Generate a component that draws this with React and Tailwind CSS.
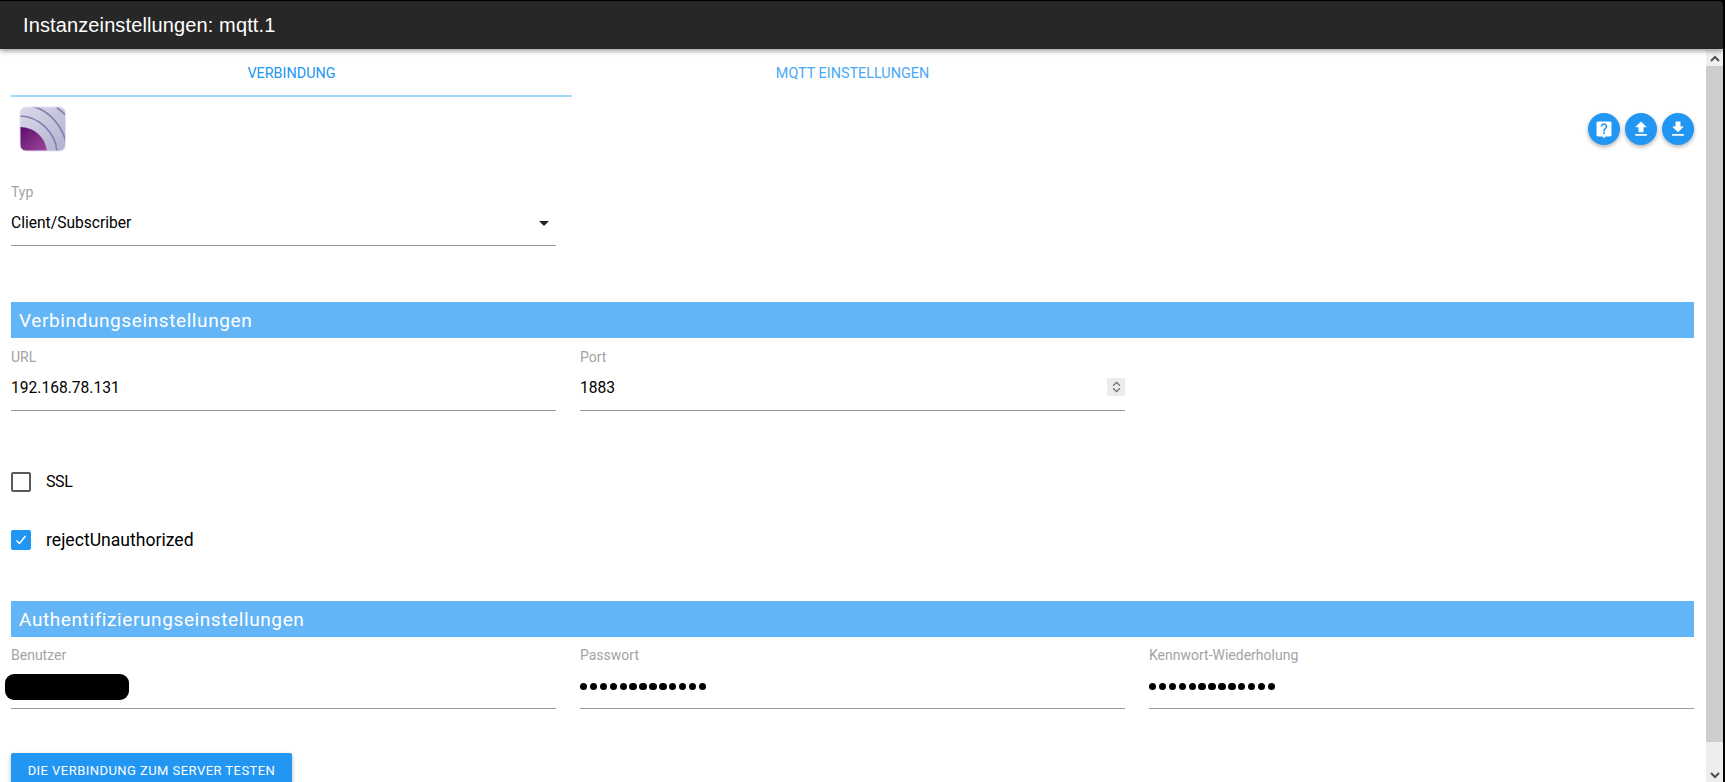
import React from "react";

const Label = ({ children }) => (
  <div className="h-[14px] text-[14px] leading-[14px] text-[#a3a3a3]">{children}</div>
);

const Field = ({ label, children, className = "" }) => (
  <div className={`flex flex-col ${className}`}>
    <Label>{label}</Label>
    <div className="relative mt-[5px] h-[42px] pb-[2px] flex items-center border-b border-[#9a9a9a] text-[15.6px] text-black">
      {children}
    </div>
  </div>
);

const Dots = () => (
  <div className="flex gap-[2.5px]">
    {Array.from({ length: 13 }).map((_, i) => (
      <span key={i} className="w-[7.4px] h-[7.4px] rounded-full bg-black block" />
    ))}
  </div>
);

const Section = ({ children }) => (
  <div className="h-[36px] bg-[#64b5f6] pl-[8px] pt-[2px] flex items-center text-[19px] tracking-[0.6px] text-white">
    {children}
  </div>
);

const Fab = ({ d }) => (
  <button className="w-[32px] h-[32px] rounded-full bg-[#2196f3] flex items-center justify-center shadow-[0_2px_4px_rgba(0,0,0,0.3)]">
    <svg viewBox="0 0 24 24" className="w-[20px] h-[20px]" fill="#fff">
      <path d={d} />
    </svg>
  </button>
);

const Logo = () => (
  <svg viewBox="0 0 48 46" className="w-[48px] h-[46px]">
    <defs>
      <linearGradient id="bg" x1="0" y1="0" x2="1" y2="1">
        <stop offset="0" stopColor="#dcdbea" />
        <stop offset="1" stopColor="#b0b0d0" />
      </linearGradient>
      <linearGradient id="pu" x1="0" y1="0" x2="1" y2="1">
        <stop offset="0" stopColor="#5a0c6a" />
        <stop offset="1" stopColor="#a04a9c" />
      </linearGradient>
      <clipPath id="cl">
        <rect x="1" y="1" width="45.5" height="44" rx="6" />
      </clipPath>
    </defs>
    <g clipPath="url(#cl)">
      <rect width="48" height="46" fill="url(#bg)" />
      <path d="M0 21 C16 21 27 32 28 46 L0 46 Z" fill="url(#pu)" />
      <path d="M0 10 C20 10 37 27 38 46" fill="none" stroke="#7f7fb0" strokeWidth="1.6" />
      <path d="M12 0 C32 4 46 24 48 42" fill="none" stroke="#7f7fb0" strokeWidth="1.6" />
      <path d="M36 0 L48 10" fill="none" stroke="#7f7fb0" strokeWidth="1.6" />
    </g>
    <rect x="1" y="1" width="45.5" height="44" rx="6" fill="none" stroke="#e9dff2" strokeWidth="1" />
  </svg>
);

const Chevron = ({ up }) => (
  <svg viewBox="0 0 10 7" className="w-[10px] h-[7px]">
    <path d={up ? "M1 6 L5 2 L9 6" : "M1 1 L5 5 L9 1"} fill="none" stroke="#505050" strokeWidth="2" />
  </svg>
);

export default function App() {
  return (
    <div
      className="h-[782px] w-[1725px] overflow-hidden bg-black pt-px pr-[2px] flex flex-col"
      style={{ fontFamily: "Roboto, 'Noto Sans', sans-serif" }}
    >
      <header
        className="relative z-10 h-[48px] shrink-0 bg-[#272727] rounded-tr-[4px] pl-[23px] flex items-center text-[20px] tracking-[0.12px] text-white shadow-[0_2px_5px_rgba(0,0,0,0.4)]"
        style={{ fontFamily: "'Liberation Sans', Arial, sans-serif" }}
      >
        Instanzeinstellungen: mqtt.1
      </header>
      <div className="flex flex-1 min-h-0 bg-white">
        <main className="flex-1 min-w-0 pl-[11px] pr-[12px] flex flex-col overflow-hidden">
          <nav className="flex h-[48px] shrink-0">
            <div className="w-[561px] flex items-center justify-center border-b-2 border-[#a6d8fb] text-[14.4px] text-[#2196f3] pt-[3px]">
              VERBINDUNG
            </div>
            <div className="w-[561px] flex items-center justify-center text-[14.4px] text-[#4aa8f5] pt-[1px]">
              MQTT EINSTELLUNGEN
            </div>
          </nav>
          <div className="flex justify-between h-[88px] shrink-0">
            <div className="pl-[8px] pt-[9px]">
              <Logo />
            </div>
            <div className="flex gap-[5px] pt-[16px]">
              <Fab d="M19 3H5c-1.1 0-2 .9-2 2v14c0 1.1.9 2 2 2h5l2 2 2-2h5c1.1 0 2-.9 2-2V5c0-1.1-.9-2-2-2zm-6 15h-2v-2h2v2zm1.9-6.6-.9.9c-.7.7-1 1.3-1 2.7h-2v-.5c0-1.1.4-2.1 1.2-2.8l1.2-1.3c.4-.3.6-.8.6-1.4 0-1.1-.9-2-2-2s-2 .9-2 2H8c0-2.2 1.8-4 4-4s4 1.8 4 4c0 .9-.4 1.7-1.1 2.4z" />
              <Fab d="M9 16h6v-6h4l-7-7-7 7h4v6zm-4 2h14v2H5v-2z" />
              <Fab d="M19 9h-4V3H9v6H5l7 7 7-7zM5 18v2h14v-2H5z" />
            </div>
          </div>
          <Field label="Typ" className="w-[545px]">
            <span>Client/Subscriber</span>
            <svg viewBox="0 0 10 5" className="absolute right-[7px] top-[17px] w-[10px] h-[5px]">
              <path d="M0 0 H10 L5 5 Z" fill="#222" />
            </svg>
          </Field>
          <div className="mt-[56px] shrink-0">
            <Section>Verbindungseinstellungen</Section>
          </div>
          <div className="grid grid-cols-3 gap-x-[24px] mt-[12px] shrink-0">
            <Field label="URL">192.168.78.131</Field>
            <Field label="Port">
              <span>1883</span>
              <span className="absolute right-0 top-[9px] w-[18px] h-[18px] bg-[#ececec] flex flex-col items-center justify-center gap-[2px]">
                <svg viewBox="0 0 8 4" className="w-[9px] h-[5px]">
                  <path d="M1 4 L4 1 L7 4" fill="none" stroke="#666" strokeWidth="1" />
                </svg>
                <svg viewBox="0 0 8 4" className="w-[9px] h-[5px]">
                  <path d="M1 0 L4 3 L7 0" fill="none" stroke="#666" strokeWidth="1" />
                </svg>
              </span>
            </Field>
          </div>
          <label className="flex items-center mt-[61px] h-[20px] shrink-0">
            <span className="w-[20px] h-[20px] border-2 border-[#5a5a5a] rounded-[2px]" />
            <span className="ml-[15px] text-[16px] tracking-[-0.4px] text-black">SSL</span>
          </label>
          <label className="flex items-center mt-[38px] h-[20px] shrink-0">
            <span className="w-[20px] h-[20px] rounded-[2px] bg-[#2196f3] flex items-center justify-center">
              <svg viewBox="0 0 14 14" className="w-[14px] h-[14px]">
                <path d="M2.5 7.5 L5.5 10.5 L11.5 3" fill="none" stroke="#fff" strokeWidth="1.5" />
              </svg>
            </span>
            <span className="ml-[15px] text-[17.6px] text-black">rejectUnauthorized</span>
          </label>
          <div className="mt-[51px] shrink-0">
            <Section>Authentifizierungseinstellungen</Section>
          </div>
          <div className="grid grid-cols-3 gap-x-[24px] mt-[11px] shrink-0">
            <Field label="Benutzer">
              <span className="absolute left-[-6px] top-[7px] w-[124px] h-[26px] bg-black rounded-[9px]" />
            </Field>
            <Field label="Passwort"><Dots /></Field>
            <Field label="Kennwort-Wiederholung"><Dots /></Field>
          </div>
          <div className="mt-[44px] shrink-0">
            <button className="w-[281px] h-[36px] rounded-[2px] bg-[#2196f3] text-white text-[13px] tracking-[0.45px] shadow-[0_2px_4px_rgba(0,0,0,0.3)]">
              DIE VERBINDUNG ZUM SERVER TESTEN
            </button>
          </div>
        </main>
        <aside className="w-[17px] shrink-0 flex flex-col bg-[#cdcdcd] mt-px">
          <div className="h-[16px] bg-[#f0f0f0] flex items-center justify-center"><Chevron up /></div>
          <div className="flex-1" />
          <div className="h-[40px] bg-[#eeeeee] flex items-end justify-center pb-[3px]"><Chevron /></div>
        </aside>
      </div>
    </div>
  );
}
